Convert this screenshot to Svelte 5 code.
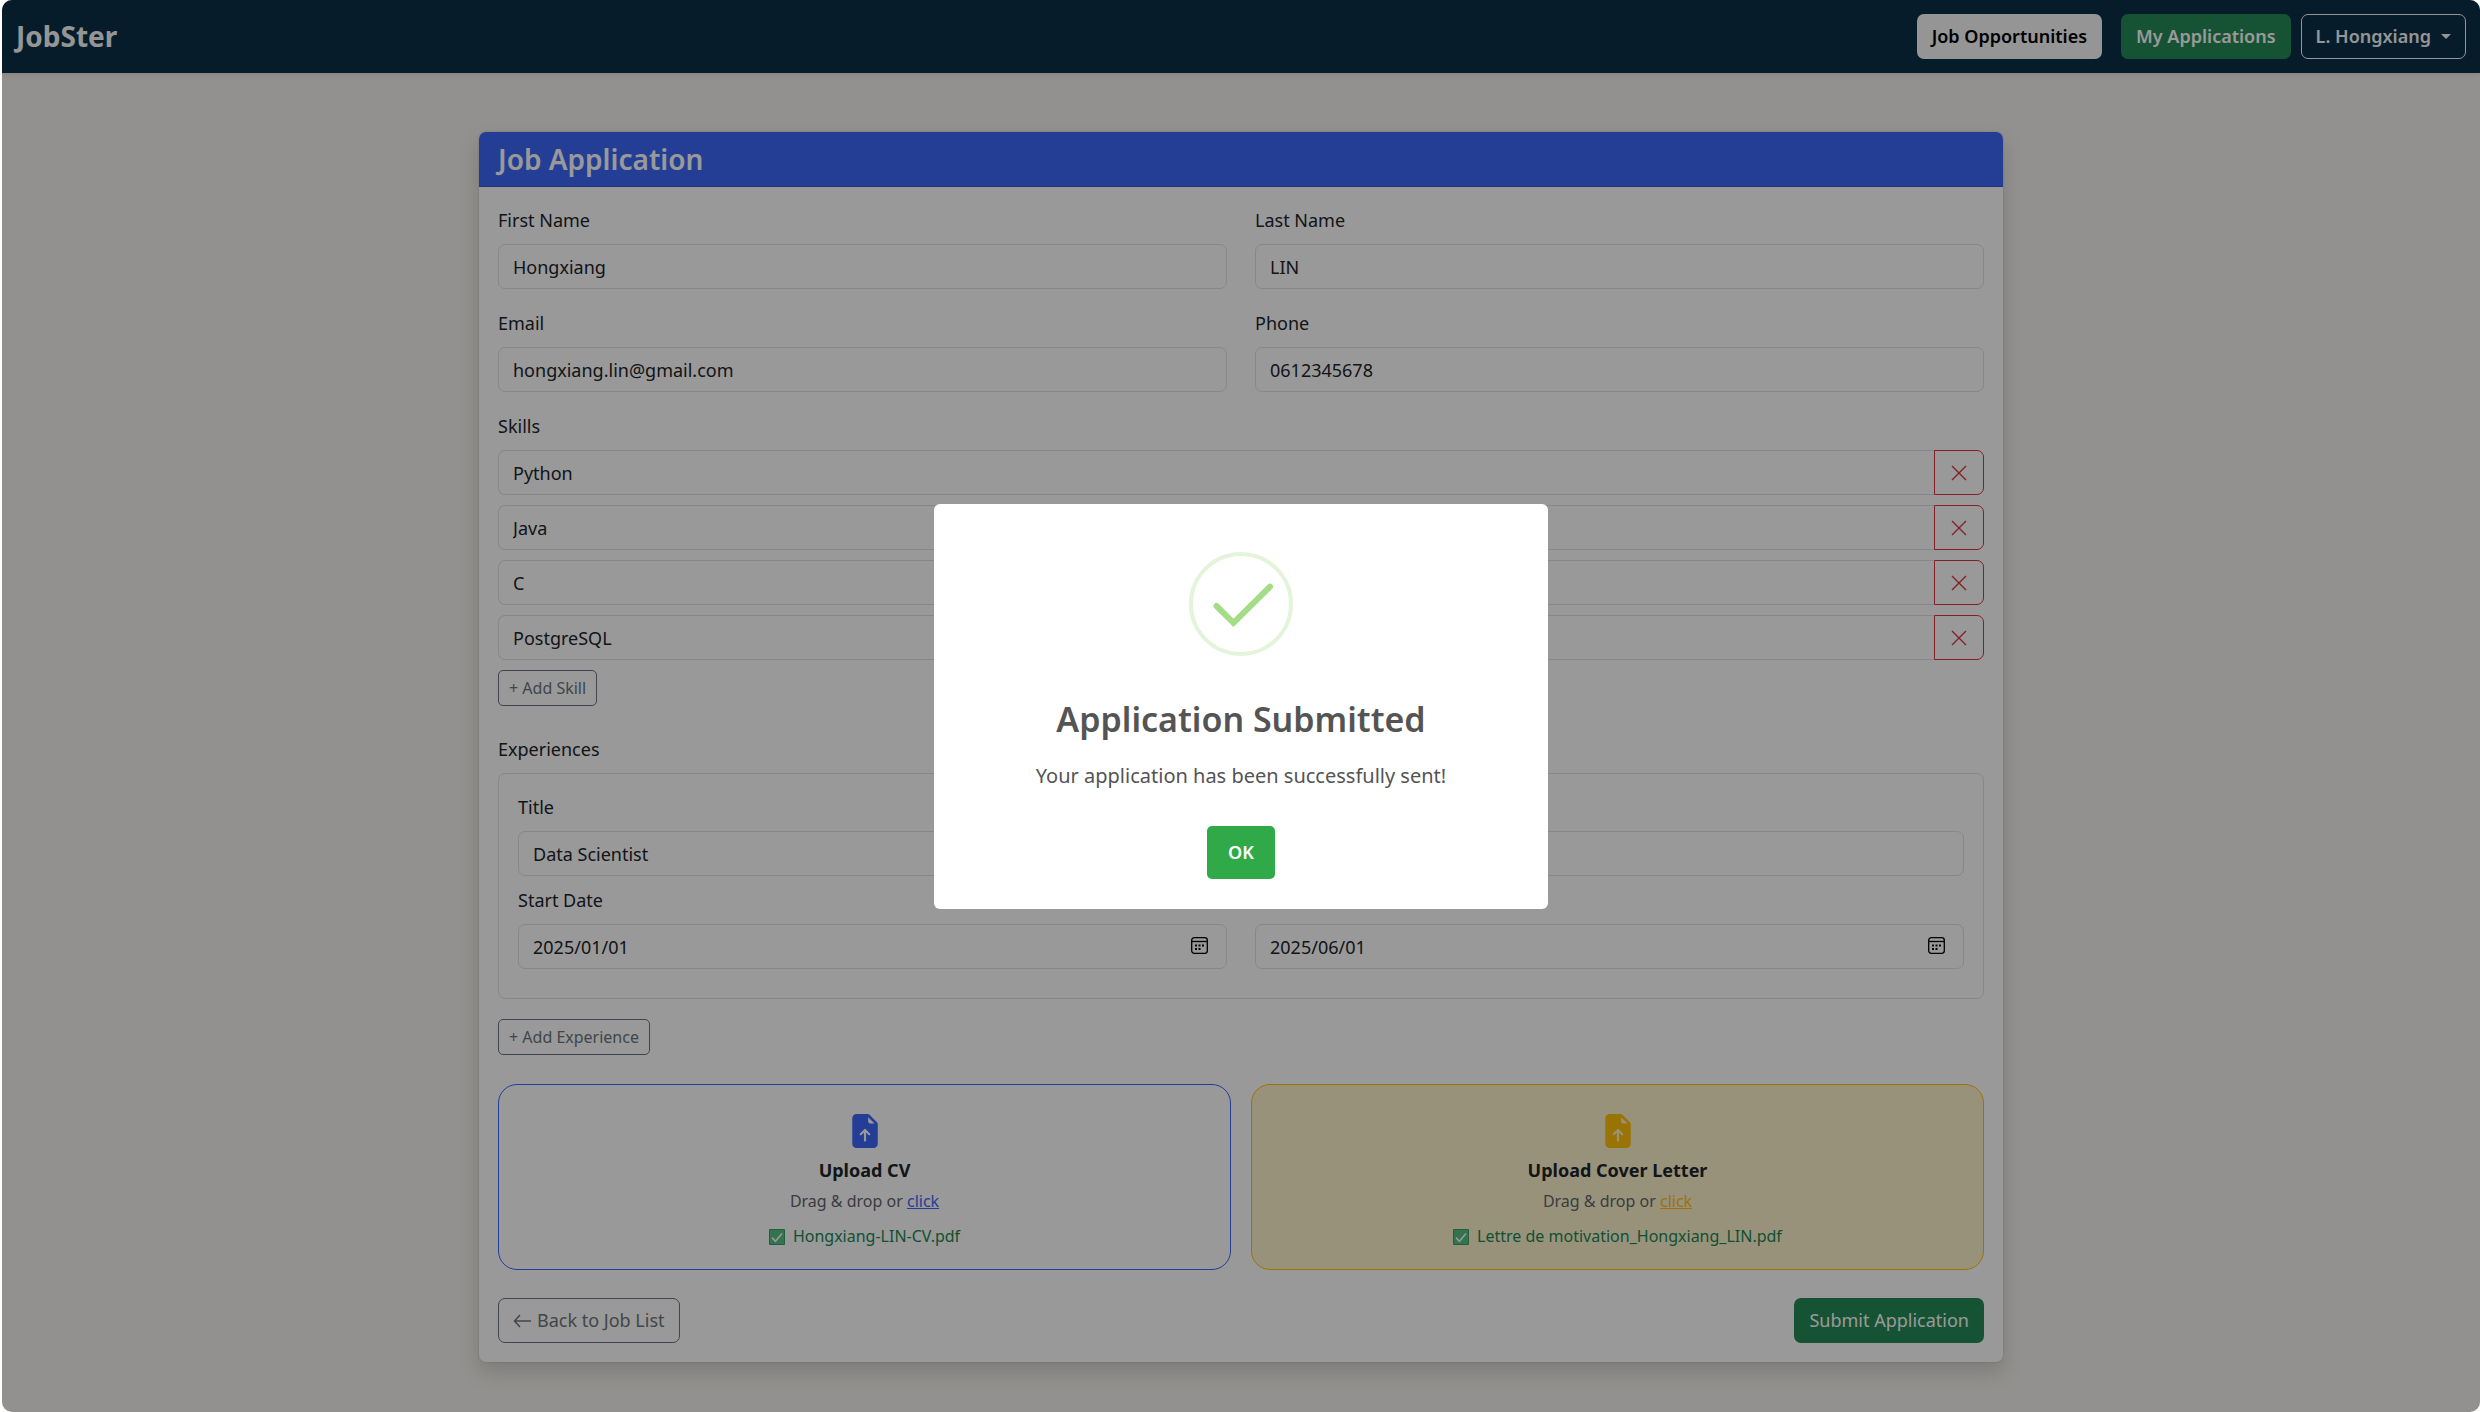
<script>
  let firstName = $state('Hongxiang');
  let lastName = $state('LIN');
  let email = $state('hongxiang.lin@gmail.com');
  let phone = $state('0612345678');
  let skills = $state(['Python', 'Java', 'C', 'PostgreSQL']);
  let experiences = $state([
    { title: 'Data Scientist', start: '2025/01/01', end: '2025/06/01' }
  ]);
  const uploads = [
    { kind: 'cv', title: 'Upload CV', file: 'Hongxiang-LIN-CV.pdf' },
    { kind: 'letter', title: 'Upload Cover Letter', file: 'Lettre de motivation_Hongxiang_LIN.pdf' }
  ];
  let dialogOpen = $state(true);
</script>

{#snippet dateField(id, label, exp, key)}
  <div class="field">
    <label for={id}>{label}</label>
    <div class="date">
      <input {id} type="text" class="control" bind:value={exp[key]} />
      <button type="button" class="picker" aria-label="Open calendar">
        <svg viewBox="0 0 17 17" width="17" height="17" aria-hidden="true">
          <rect x="0.700" y="0.700" width="15.600" height="15.600" rx="2.500" fill="none" stroke="currentColor" stroke-width="1.300" />
          <path d="M1 4.500h15" stroke="currentColor" stroke-width="1.300" />
          <path d="M4 7.500h2v2H4zM7.500 7.500h2v2h-2zM11 7.500h2v2h-2zM4 11h2v2H4zM7.500 11h2v2h-2z" fill="currentColor" />
        </svg>
      </button>
    </div>
  </div>
{/snippet}

<div class="frame">
  <nav>
    <a class="brand" href="#home">JobSter</a>
    <div class="links">
      <a class="btn light" href="#jobs">Job Opportunities</a>
      <a class="btn green strong" href="#applications">My Applications</a>
      <button type="button" class="btn user">L. Hongxiang<span class="caret"></span></button>
    </div>
  </nav>

  <main>
    <form class="card" onsubmit={(e) => { e.preventDefault(); dialogOpen = true; }}>
      <h1>Job Application</h1>
      <div class="body">
        <div class="pair">
          <div class="field">
            <label for="first">First Name</label>
            <input id="first" type="text" class="control" bind:value={firstName} />
          </div>
          <div class="field">
            <label for="last">Last Name</label>
            <input id="last" type="text" class="control" bind:value={lastName} />
          </div>
        </div>
        <div class="pair">
          <div class="field">
            <label for="email">Email</label>
            <input id="email" type="email" class="control" bind:value={email} />
          </div>
          <div class="field">
            <label for="phone">Phone</label>
            <input id="phone" type="tel" class="control" bind:value={phone} />
          </div>
        </div>

        <div class="field">
          <label for="skill-0">Skills</label>
          <div class="skills">
            {#each skills as skill, i}
              <div class="skill">
                <input id="skill-{i}" type="text" class="control" aria-label="Skill {i + 1}" bind:value={skills[i]} />
                <button type="button" class="remove" aria-label="Remove {skill}" onclick={() => skills.splice(i, 1)}>
                  <svg viewBox="0 0 16 16" width="16" height="16" aria-hidden="true">
                    <path d="M1 1l14 14M15 1L1 15" stroke="currentColor" stroke-width="1.4" />
                  </svg>
                </button>
              </div>
            {/each}
            <button type="button" class="add" onclick={() => skills.push('')}>+ Add Skill</button>
          </div>
        </div>

        <section class="experiences">
          <h2>Experiences</h2>
          {#each experiences as exp, i}
            <div class="experience">
              <div class="field">
                <label for="title-{i}">Title</label>
                <input id="title-{i}" type="text" class="control" bind:value={exp.title} />
              </div>
              <div class="pair">
                {@render dateField(`start-${i}`, 'Start Date', exp, 'start')}
                {@render dateField(`end-${i}`, 'End Date', exp, 'end')}
              </div>
            </div>
          {/each}
          <button type="button" class="add" onclick={() => experiences.push({ title: '', start: '', end: '' })}>+ Add Experience</button>
        </section>

        <div class="uploads">
          {#each uploads as up}
            <div class="drop {up.kind}">
              <svg class="doc" viewBox="0 0 16 16" width="34" height="34" aria-hidden="true">
                <path fill="currentColor" d="M9.293 0H4a2 2 0 0 0-2 2v12a2 2 0 0 0 2 2h8a2 2 0 0 0 2-2V4.707A1 1 0 0 0 13.707 4L10 .293A1 1 0 0 0 9.293 0M9.5 3.5v-2l3 3h-2a1 1 0 0 1-1-1M6.354 9.854a.5.5 0 0 1-.708-.708l2-2a.5.5 0 0 1 .708 0l2 2a.5.5 0 0 1-.708.708L8.5 8.707V12.5a.5.5 0 0 1-1 0V8.707z" />
              </svg>
              <strong>{up.title}</strong>
              <p class="hint">Drag &amp; drop or <a href="#{up.kind}">click</a></p>
              <p class="file">
                <svg viewBox="0 0 16 16" width="16" height="16" aria-hidden="true">
                  <rect width="16" height="16" rx="1" fill="#3f9d68" />
                  <rect x="1" y="1" width="14" height="14" fill="#55c083" />
                  <path d="M3 8.6l3.4 3.6L13 4.4" fill="none" stroke="#fff" stroke-width="1.6" />
                </svg>
                {up.file}
              </p>
            </div>
          {/each}
        </div>

        <div class="actions">
          <a class="btn back" href="#jobs">
            <svg viewBox="0 0 18 14" width="18" height="14" aria-hidden="true">
              <path d="M7 1L1.500 7L7 13M1.500 7H18" fill="none" stroke="currentColor" stroke-width="1.5" />
            </svg>
            Back to Job List
          </a>
          <button type="submit" class="btn green">Submit Application</button>
        </div>
      </div>
    </form>
  </main>

  {#if dialogOpen}
    <div class="overlay">
      <div class="dialog" role="dialog" aria-modal="true" aria-labelledby="dialog-title">
        <svg class="success" viewBox="0 0 104 104" width="104" height="104" aria-hidden="true">
          <circle cx="52" cy="52" r="50" fill="none" stroke="#e4f4db" stroke-width="4" />
          <path d="M27.500 54L44.500 70.800L81 34.700" fill="none" stroke="#a5dc86" stroke-width="6" stroke-linecap="round" />
        </svg>
        <h2 id="dialog-title">Application Submitted</h2>
        <p>Your application has been successfully sent!</p>
        <button type="button" class="ok" onclick={() => (dialogOpen = false)}>OK</button>
      </div>
    </div>
  {/if}
</div>

<style>
  :global(body) {
    background: #fff;
  }
  .frame,
  .frame * {
    box-sizing: border-box;
  }
  .frame {
    position: relative;
    margin-left: 2px;
    min-height: 100vh;
    border-radius: 10px;
    overflow: hidden;
    background: #f4f2ee;
    color: #212529;
    font: 18px/29px 'Noto Sans', 'Open Sans', sans-serif;
  }
  h1,
  h2,
  p {
    margin: 0;
    font-weight: 400;
  }
  button,
  input {
    font: inherit;
    color: inherit;
  }
  button {
    cursor: pointer;
  }
  nav {
    display: flex;
    align-items: center;
    justify-content: space-between;
    padding: 14px;
    background: #0b2f47;
    box-shadow: 0 2px 5px rgba(0, 0, 0, 0.08);
  }
  .brand {
    color: #f8f9fa;
    font-size: 28px;
    font-weight: 700;
    text-decoration: none;
  }
  .links {
    display: flex;
    gap: 10px;
  }
  .btn {
    display: inline-flex;
    align-items: center;
    justify-content: center;
    height: 45px;
    padding: 0 14px;
    border: 1px solid transparent;
    border-radius: 7px;
    text-decoration: none;
    white-space: nowrap;
  }
  .light,
  .strong,
  .user {
    font-weight: 600;
  }
  .light {
    margin-right: 9px;
    background: #f8f9fa;
    color: #000;
  }
  .green {
    background: #248a57;
    color: #fff;
  }
  .user {
    gap: 10px;
    background: none;
    border-color: #f8f9fa;
    color: #f8f9fa;
  }
  .caret {
    border: 5px solid transparent;
    border-top-color: currentColor;
    border-bottom: 0;
  }
  main {
    padding: 59px 24px 50px;
  }
  .card {
    max-width: 1524px;
    margin: 0 auto;
    border-radius: 7px;
    background: #fff;
    box-shadow: 0 10px 20px rgba(0, 0, 0, 0.15), 0 0 2px rgba(0, 0, 0, 0.2);
  }
  h1 {
    padding: 10px 19px;
    border-bottom: 1px solid #3256cc;
    border-radius: 7px 7px 0 0;
    background: #3d68fb;
    color: #fff;
    font-size: 28px;
    font-weight: 600;
    line-height: 34px;
  }
  .body {
    display: flex;
    flex-direction: column;
    gap: 20px;
    padding: 19px;
  }
  .pair {
    display: grid;
    grid-template-columns: 1fr 1fr;
    gap: 28px;
  }
  .field {
    display: flex;
    flex-direction: column;
    gap: 9px;
  }
  .control {
    width: 100%;
    min-width: 0;
    height: 45px;
    padding: 0 14px;
    border: 1px solid #dee2e6;
    border-radius: 7px;
    background: #fff;
    outline: none;
  }
  .skills {
    display: flex;
    flex-direction: column;
    gap: 10px;
  }
  .skill {
    display: flex;
  }
  .skill .control {
    border-right: 0;
    border-radius: 7px 0 0 7px;
  }
  .remove {
    display: grid;
    flex: 0 0 50px;
    place-items: center;
    padding: 0;
    border: 1px solid #dc3545;
    border-radius: 0 7px 7px 0;
    background: none;
    color: #dc3545;
  }
  .add {
    align-self: flex-start;
    height: 36px;
    padding: 0 10px;
    border: 1px solid #6c757d;
    border-radius: 5px;
    background: none;
    color: #6c757d;
    font-size: 16px;
  }
  .experiences {
    display: flex;
    flex-direction: column;
    padding: 9px 0;
  }
  h2 {
    font-size: 18px;
  }
  .experience {
    display: flex;
    flex-direction: column;
    gap: 10px;
    margin: 9px 0 20px;
    padding: 19px 19px 29px;
    border: 1px solid #dee2e6;
    border-radius: 7px;
  }
  .date {
    position: relative;
  }
  .picker {
    position: absolute;
    top: 0;
    right: 19px;
    display: grid;
    place-items: center;
    height: 43px;
    padding: 0;
    border: 0;
    background: none;
    color: #000;
  }
  .uploads {
    display: grid;
    grid-template-columns: 1fr 1fr;
    gap: 20px;
  }
  .drop {
    display: flex;
    flex-direction: column;
    align-items: center;
    padding: 29px 19px 18px;
    border: 1px solid #3d68fb;
    border-radius: 19px;
  }
  .drop.letter {
    border-color: #ffc107;
    background: #fff3cd;
  }
  .cv .doc,
  .cv a {
    color: #3d68fb;
  }
  .letter .doc,
  .letter a {
    color: #ffc107;
  }
  strong {
    margin-top: 8px;
    font-weight: 700;
  }
  .hint {
    margin-top: 2px;
    color: #5f666d;
    font-size: 16px;
  }
  .file {
    display: flex;
    align-items: center;
    gap: 8px;
    margin-top: 6px;
    color: #198754;
    font-size: 16px;
  }
  .actions {
    display: flex;
    justify-content: space-between;
    padding-top: 8px;
  }
  .back {
    gap: 6px;
    border-color: #6c757d;
    color: #6c757d;
  }
  .overlay {
    position: absolute;
    inset: 0;
    display: grid;
    place-items: center;
    background: rgba(0, 0, 0, 0.4);
  }
  .dialog {
    display: flex;
    flex-direction: column;
    align-items: center;
    width: 614px;
    max-width: 100%;
    padding: 48px 19px 30px;
    border-radius: 6px;
    background: #fff;
    color: #545454;
  }
  .dialog h2 {
    margin-top: 42px;
    font-size: 34px;
    font-weight: 600;
    line-height: 43px;
  }
  .dialog p {
    margin-top: 19px;
    font-size: 20px;
    line-height: 32px;
  }
  .ok {
    height: 53px;
    margin-top: 34px;
    padding: 0 21px;
    border: 0;
    border-radius: 5px;
    background: #30a948;
    color: #fff;
    font-weight: 600;
  }
</style>
